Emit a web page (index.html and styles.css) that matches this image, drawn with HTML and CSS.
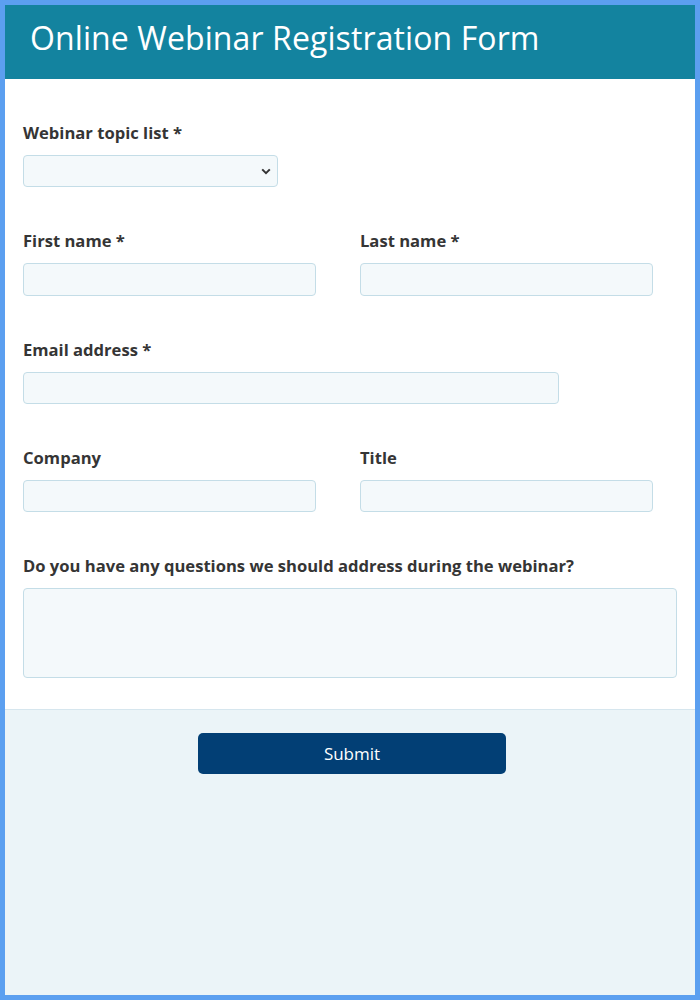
FILE: index.html
```html
<!DOCTYPE html>
<html lang="en">
<head>
    <meta charset="UTF-8">
    <title>Online Webinar Registration Form</title>
    <link rel="stylesheet" href="styles.css">
</head>
<body>
<div class="frame">
    <div class="header">
        <h1 class="title">Online Webinar Registration Form</h1>
    </div>
    <form class="form-body">
        <div class="field">
            <label class="label">Webinar topic list *</label>
            <div class="select-wrap">
                <select class="select" title=""></select>
                <svg class="chevron" width="10" height="7" viewBox="0 0 10 7">
                    <path d="M1.2 1.4 L5 5.2 L8.8 1.4" fill="none" stroke="#333" stroke-width="2"/>
                </svg>
            </div>
        </div>
        <div class="field row row-name">
            <div class="col">
                <label class="label">First name *</label>
                <input class="input" type="text" title="">
            </div>
            <div class="col">
                <label class="label">Last name *</label>
                <input class="input" type="text" title="">
            </div>
        </div>
        <div class="field">
            <label class="label">Email address *</label>
            <input class="input input-email" type="text" title="">
        </div>
        <div class="field row">
            <div class="col">
                <label class="label">Company</label>
                <input class="input" type="text" title="">
            </div>
            <div class="col">
                <label class="label">Title</label>
                <input class="input" type="text" title="">
            </div>
        </div>
        <div class="field">
            <label class="label">Do you have any questions we should address during the webinar?</label>
            <textarea class="textarea" title=""></textarea>
        </div>
    </form>
    <div class="footer">
        <button class="btn-submit" type="button">Submit</button>
    </div>
</div>
</body>
</html>
```

FILE: styles.css
```css
* {
    margin: 0;
    padding: 0;
    box-sizing: border-box;
    outline: none;
}

html,
body {
    width: 100%;
    height: 100%;
}

body {
    font-family: "Open Sans", "Noto Sans", sans-serif;
    color: #353535;
}

.frame {
    width: 700px;
    height: 1000px;
    border: 5px solid #5b9ff0;
    display: flex;
    flex-direction: column;
    background-color: #ebf4f8;
}

.header {
    height: 74px;
    padding: 0 0 10px 25px;
    background-color: #13839f;
    display: flex;
    align-items: center;
}

.title {
    font-size: 32px;
    font-weight: normal;
    color: #ffffff;
    letter-spacing: 0.1px;
}

.form-body {
    padding: 44px 18px 31px;
    background-color: #ffffff;
}

.field {
    margin-bottom: 44px;
}

.field:last-child {
    margin-bottom: 0;
}

.row {
    display: grid;
    grid-template-columns: 293px 293px;
    column-gap: 44px;
}

.label {
    display: block;
    height: 20px;
    line-height: 20px;
    margin-bottom: 12px;
    font-size: 16.6px;
    font-weight: bold;
    color: #353535;
}

.input,
.select,
.textarea {
    display: block;
    width: 100%;
    height: 32px;
    border: 1px solid #c4dde7;
    border-radius: 4px;
    background-color: #f4f9fb;
    font: 15px "Open Sans", sans-serif;
    padding: 0 8px;
}

.row-name .input {
    height: 33px;
}

.select-wrap {
    position: relative;
    width: 255px;
}

.select {
    appearance: none;
    -webkit-appearance: none;
}

.chevron {
    position: absolute;
    right: 7px;
    top: 13px;
}

.input-email {
    width: 536px;
}

.textarea {
    height: 90px;
    resize: none;
}

.footer {
    flex: 1;
    border-top: 1px solid #d6e6ee;
    display: flex;
    justify-content: center;
    align-items: flex-start;
    padding: 23px 0 0 4px;
}

.btn-submit {
    width: 308px;
    height: 41px;
    border: none;
    border-radius: 5px;
    background-color: #023f75;
    color: #ffffff;
    font: 17px "Open Sans", sans-serif;
    cursor: pointer;
}
```
